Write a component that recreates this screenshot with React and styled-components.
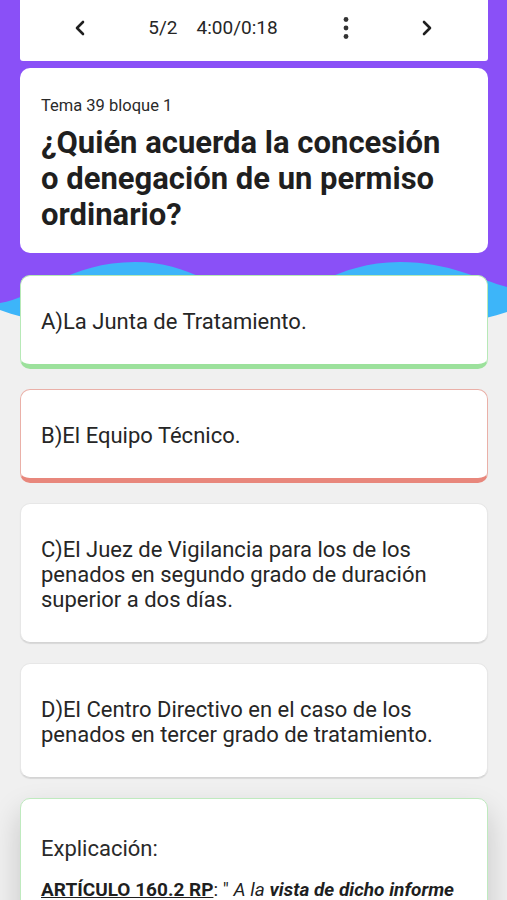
import React from "react";
import styled, { createGlobalStyle } from "styled-components";

const GlobalStyle = createGlobalStyle`
  html, body { margin: 0; padding: 0; }
  body {
    background: #f0f0f0;
    font-family: Roboto, "Noto Sans", "Liberation Sans", sans-serif;
    color: #262626;
  }
`;

const Page = styled.div`
  position: relative;
  width: 507px;
  min-height: 900px;
  overflow: hidden;
  background: #f0f0f0;
`;

const Backdrop = styled.svg`
  position: absolute;
  top: 0;
  left: 0;
  z-index: 0;
`;

const Content = styled.div`
  position: relative;
  z-index: 1;
  display: flex;
  flex-direction: column;
  padding: 0 19px 0 20px;
`;

const TopBar = styled.div`
  height: 61px;
  background: #fff;
  border-radius: 0 0 3px 3px;
  display: grid;
  grid-template-columns: 120px 146px 120px 42px 1fr;
  align-items: center;
  justify-items: center;
`;

const Counter = styled.div`
  display: flex;
  gap: 19px;
  font-size: 19px;
  color: #262626;
  white-space: nowrap;
  margin-top: -6px;
`;

const IconBox = styled.div`
  display: flex;
  align-items: center;
  justify-content: center;
  margin-top: -6px;
`;

const QuestionCard = styled.div`
  margin-top: 7px;
  background: #fff;
  border-radius: 10px;
  padding: 28px 30px 20px 21px;
`;

const Topic = styled.div`
  font-size: 16.5px;
  line-height: 20px;
  color: #2a2a2a;
`;

const Title = styled.h1`
  margin: 9px 0 0;
  font-size: 31px;
  line-height: 36px;
  font-weight: 700;
  color: #1f1f1f;
`;

const Options = styled.div`
  margin-top: 22px;
  display: flex;
  flex-direction: column;
  gap: 20px;
`;

const tones = {
  correct: { border: "#b7e9b7", bottom: "#9ce19c", bw: "5px", shadow: "none" },
  wrong: { border: "#eab0a8", bottom: "#e8877c", bw: "5px", shadow: "none" },
  neutral: {
    border: "#e7e7e7",
    bottom: "#d4d4d4",
    bw: "1px",
    shadow: "0 1px 1px rgba(0,0,0,0.10)",
  },
};

const OptionCard = styled.div`
  background: #fff;
  border-radius: 10px;
  border: 1px solid ${(p) => tones[p.$tone].border};
  border-bottom: ${(p) => tones[p.$tone].bw} solid ${(p) => tones[p.$tone].bottom};
  box-shadow: ${(p) => tones[p.$tone].shadow};
  padding: 33px 20px 30px;
  font-size: 22px;
  line-height: 25px;
  color: #262626;
`;

const ExplainCard = styled.div`
  background: #fff;
  border-radius: 10px;
  border: 1px solid #bfeabf;
  padding: 37px 20px 20px;
  box-shadow: 0 14px 30px rgba(0, 0, 0, 0.18);
`;

const ExplainTitle = styled.div`
  font-size: 22px;
  line-height: 26px;
  color: #2a2a2a;
`;

const ExplainText = styled.p`
  margin: 15px 0 0;
  font-size: 19px;
  line-height: 25px;
  color: #1f1f1f;
  white-space: nowrap;
`;

const Ref = styled.span`
  font-weight: 700;
  text-decoration: underline;
`;

const Chevron = ({ dir }) => (
  <svg width="14" height="18" viewBox="0 0 14 18">
    <polyline
      points={dir === "left" ? "10,3 4,9 10,15" : "4,3 10,9 4,15"}
      fill="none"
      stroke="#1f1f1f"
      strokeWidth="2.6"
      strokeLinecap="round"
      strokeLinejoin="round"
    />
  </svg>
);

const Dots = () => (
  <svg width="8" height="24" viewBox="0 0 8 24">
    <circle cx="4" cy="3.5" r="2.4" fill="#333" />
    <circle cx="4" cy="12" r="2.4" fill="#333" />
    <circle cx="4" cy="20.5" r="2.4" fill="#333" />
  </svg>
);

const options = [
  { tone: "correct", text: "A)La Junta de Tratamiento." },
  { tone: "wrong", text: "B)El Equipo Técnico." },
  {
    tone: "neutral",
    text: "C)El Juez de Vigilancia para los de los penados en segundo grado de duración superior a dos días.",
  },
  {
    tone: "neutral",
    text: "D)El Centro Directivo en el caso de los penados en tercer grado de tratamiento.",
  },
];

export default function App() {
  return (
    <Page>
      <GlobalStyle />
      <Backdrop width="507" height="360" viewBox="0 0 507 360">
        <rect x="0" y="0" width="507" height="304" fill="#8a50f7" />
        <path
          d="M0,303 C35,298 70,262 135,262 C195,262 225,298 265,298 C305,298 335,262 400,262 C450,262 480,280 507,287 L507,312 C400,348 110,350 0,310 Z"
          fill="#3db5f9"
        />
      </Backdrop>
      <Content>
        <TopBar>
          <IconBox>
            <Chevron dir="left" />
          </IconBox>
          <Counter>
            <span>5/2</span>
            <span>4:00/0:18</span>
          </Counter>
          <IconBox>
            <Dots />
          </IconBox>
          <IconBox>
            <Chevron dir="right" />
          </IconBox>
          <div />
        </TopBar>
        <QuestionCard>
          <Topic>Tema 39 bloque 1</Topic>
          <Title>¿Quién acuerda la concesión o denegación de un permiso ordinario?</Title>
        </QuestionCard>
        <Options>
          {options.map((o) => (
            <OptionCard key={o.text} $tone={o.tone}>
              {o.text}
            </OptionCard>
          ))}
          <ExplainCard>
            <ExplainTitle>Explicación:</ExplainTitle>
            <ExplainText>
              <Ref>ARTÍCULO 160.2 RP</Ref>: " <i>A la</i> <b><i>vista de dicho informe</i></b>
            </ExplainText>
          </ExplainCard>
        </Options>
      </Content>
    </Page>
  );
}
